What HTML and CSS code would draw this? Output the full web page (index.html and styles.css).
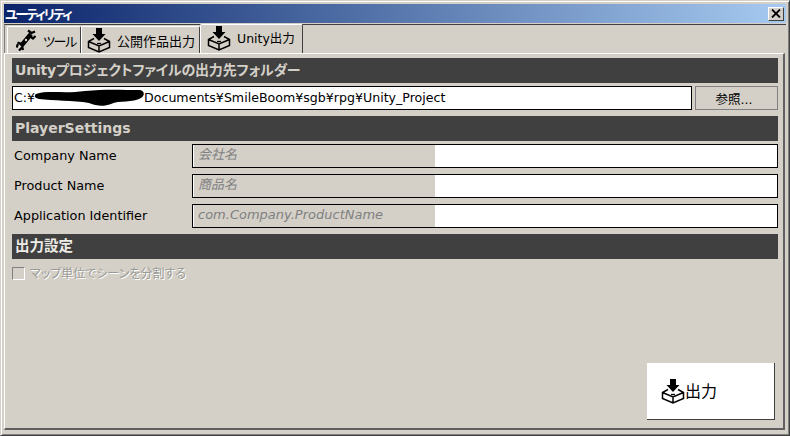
FILE: index.html
```html
<!DOCTYPE html>
<html lang="ja">
<head>
<meta charset="utf-8">
<title>ユーティリティ</title>
<link rel="stylesheet" href="styles.css">
</head>
<body>
<svg class="defs" width="0" height="0">
  <symbol id="box" viewBox="0 0 24 25">
    <path d="M9 0h6v6h3.500L12 13 5.500 6H9z" fill="#000"/>
    <path d="M7 10.500 1.500 13.500v6L12 24l10.500-4.500v-6L17 10.500M1.500 13.500 12 18l10.500-4.500M12 18v6" fill="none" stroke="#000" stroke-width="1.500"/>
    <path d="M10 15.500h4" stroke="#000" stroke-width="1.300"/>
  </symbol>
</svg>
<div class="window">
  <div class="titlebar">
    <span class="title">ユーティリティ</span>
    <span class="close"><svg width="10" height="9" viewBox="0 0 10 9"><path d="M1 0.500l8 8M9 0.500l-8 8" stroke="#000" stroke-width="1.800" fill="none"/></svg></span>
  </div>
  <div class="tabs">
    <div class="tab tab-tool">
      <svg class="tab-icon" width="20" height="22" viewBox="0 0 20 22"><path d="M5 17 15 5" stroke="#000" stroke-width="4.500" fill="none"/><path d="M12 1.500 15.500 4 19 2.500M13 6.500l4 3 2.500-2.500M1.500 13.500 6 15M7 21l-1-4M0.500 18.500 2 15M3 21.500l3-3" stroke="#000" stroke-width="2.200" fill="none"/><circle cx="10" cy="11" r="1.200" fill="#d4d0c8"/></svg>
      <span class="tab-tool-label">ツール</span>
    </div>
    <div class="tab tab-pub">
      <svg class="tab-icon" width="24" height="25"><use href="#box"/></svg>
      <span>公開作品出力</span>
    </div>
    <div class="tab tab-unity active">
      <svg class="tab-icon" width="24" height="25"><use href="#box"/></svg>
      <span class="tab-unity-label">Unity出力</span>
    </div>
  </div>
  <div class="panel">
    <h2 class="heading heading-folder">Unityプロジェクトファイルの出力先フォルダー</h2>
    <div class="path-row">
      <div class="path-input"><span class="path-text">C:¥</span><svg class="blob" width="110" height="18" viewBox="0 0 110 18"><path d="M1 5C12 1 30 5 50 2 70 0 88 1 104 1c6 0 6 6 2 8-8 5-22 2-30 6-8 3-14 2-22-1C38 11 18 12 4 10-1 9-1 6 1 5z" fill="#000"/></svg><span class="path-text">Documents¥SmileBoom¥sgb¥rpg¥Unity_Project</span></div>
      <div class="browse">参照...</div>
    </div>
    <h2 class="heading heading-player">PlayerSettings</h2>
    <div class="field">
      <span class="field-label">Company Name</span>
      <div class="field-input"><div class="field-fill">会社名</div></div>
    </div>
    <div class="field">
      <span class="field-label">Product Name</span>
      <div class="field-input"><div class="field-fill">商品名</div></div>
    </div>
    <div class="field">
      <span class="field-label">Application Identifier</span>
      <div class="field-input"><div class="field-fill">com.Company.ProductName</div></div>
    </div>
    <h2 class="heading heading-output">出力設定</h2>
    <div class="check-row">
      <span class="checkbox"></span>
      <span class="check-label">マップ単位でシーンを分割する</span>
    </div>
    <div class="actions">
      <div class="export">
        <svg width="24" height="25"><use href="#box"/></svg>
        <span class="export-label">出力</span>
      </div>
    </div>
  </div>
</div>
</body>
</html>
```
FILE: styles.css
```css
* { box-sizing: border-box; }
html, body { margin: 0; padding: 0; }
body {
  width: 790px;
  height: 436px;
  overflow: hidden;
  background: #d4d0c8;
  font-family: "DejaVu Sans", "Noto Sans CJK JP", sans-serif;
  font-size: 13px;
  color: #000;
  font-feature-settings: "palt";
}
.defs { position: absolute; }
.window {
  width: 790px;
  height: 436px;
  display: flex;
  flex-direction: column;
  padding: 3px;
  border: 1px solid #d4d0c8;
  border-right-color: #404040;
  border-bottom-color: #404040;
  box-shadow: inset 1px 1px 0 #fff, inset -1px -1px 0 #808080;
}
.titlebar {
  height: 19px;
  flex: none;
  display: flex;
  align-items: center;
  justify-content: space-between;
  padding: 0 2px 0 1px;
  background: linear-gradient(to right, #0a246a, #a6caf0);
  color: #fff;
}
.title {
  font-family: "Noto Sans CJK JP", sans-serif;
  font-weight: 700;
  font-size: 13px;
  line-height: 18px;
  letter-spacing: -2px;
}
.close {
  width: 16px;
  height: 14px;
  display: flex;
  align-items: center;
  justify-content: center;
  background: #d4d0c8;
  border: 1px solid;
  border-color: #fff #404040 #404040 #fff;
}
.tabs {
  height: 29px;
  flex: none;
  display: flex;
  align-items: flex-end;
  padding-left: 2px;
  margin-top: 1px;
  border-top: 1px solid #404040;
  border-left: 1px solid #808080;
}
.tab {
  height: 27px;
  display: flex;
  align-items: center;
  background: #d4d0c8;
  border: 1px solid;
  border-color: #fff #404040 transparent #fff;
  border-bottom: 0;
  border-radius: 2px 2px 0 0;
  font-size: 13px;
  white-space: nowrap;
}
.tab-tool { width: 74px; padding-left: 8px; gap: 7px; }
.tab-tool-label { letter-spacing: -1.300px; }
.tab-pub { width: 119px; padding-left: 5px; gap: 6px; }
.tab-unity { width: 103px; padding-left: 6px; gap: 6px; font-size: 12.500px; padding-bottom: 1px; }
.tab-unity-label { padding-bottom: 3px; }
.tab.active { height: 29px; }
.tab-icon { flex: none; }
.panel {
  flex: 1;
  display: flex;
  flex-direction: column;
  padding: 4px 5px 8px 7px;
  border-top: 1px solid #fff;
  border-left: 1px solid #fff;
  border-right: 2px solid #606060;
  border-bottom: 2px solid #606060;
  margin-right: 1px;
  margin-bottom: 2px;
}
.heading {
  height: 25px;
  flex: none;
  margin: 0;
  padding: 0 3px;
  background: #404040;
  color: #d4d0c8;
  font-size: 14px;
  font-weight: 700;
  line-height: 24px;
  white-space: nowrap;
}
.heading-folder { letter-spacing: -0.200px; }
.heading-player { margin-top: 6px; }
.heading-output { margin-top: 6px; color: #ecebe6; font-size: 14.500px; }
.path-row {
  display: flex;
  gap: 3px;
  margin-top: 3px;
  height: 24px;
  flex: none;
}
.path-input {
  flex: 1;
  display: flex;
  align-items: center;
  padding-left: 1px;
  background: #fff;
  border: 1px solid #000;
  white-space: nowrap;
  font-size: 12.600px;
}
.path-text { padding-bottom: 2px; }
.blob { flex: none; margin-right: -1px; }
.browse {
  width: 83px;
  display: flex;
  align-items: center;
  justify-content: center;
  border: 1px solid #808080;
  font-size: 12.500px;
  padding-right: 5px;
}
.field {
  display: flex;
  align-items: center;
  height: 24px;
  flex: none;
  margin-top: 6px;
}
.heading-player + .field { margin-top: 3px; }
.field-label {
  width: 180px;
  flex: none;
  padding-left: 2px;
  padding-bottom: 2px;
  font-size: 12.800px;
  white-space: nowrap;
}
.field-input {
  flex: 1;
  height: 24px;
  background: #fff;
  border: 1px solid #000;
  padding-left: 1px;
}
.field-fill {
  width: 241px;
  height: 22px;
  background: #d4d0c8;
  color: #808080;
  font-style: italic;
  font-size: 13px;
  line-height: 20px;
  padding-left: 4px;
  white-space: nowrap;
}
.check-row {
  display: flex;
  align-items: center;
  gap: 5px;
  margin-top: 8px;
  height: 13px;
  flex: none;
}
.checkbox {
  width: 13px;
  height: 13px;
  flex: none;
  border: 1px solid;
  border-color: #808080 #fff #fff #808080;
}
.check-label {
  font-family: "Noto Sans CJK JP", sans-serif;
  font-size: 12px;
  color: #9a9a94;
  text-shadow: 1px 1px 0 #fff;
  white-space: nowrap;
  padding-bottom: 2px;
}
.actions {
  flex: 1;
  display: flex;
  justify-content: flex-end;
  align-items: flex-end;
  padding-right: 3px;
}
.export {
  width: 128px;
  height: 57px;
  display: flex;
  align-items: center;
  padding-left: 14px;
  background: #fff;
  border-right: 1px solid #404040;
  border-bottom: 1px solid #404040;
  font-size: 16px;
  font-family: "Noto Sans CJK JP", sans-serif;
}
.export-label { padding-bottom: 2px; }
```
